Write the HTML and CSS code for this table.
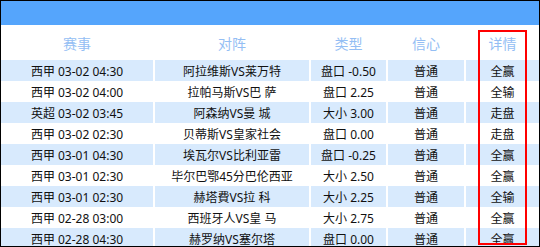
FILE: index.html
```html
<!DOCTYPE html>
<html lang="zh-CN">
<head>
<meta charset="utf-8">
<title>推荐记录</title>
<link rel="stylesheet" href="styles.css">
</head>
<body>
<div class="panel">
  <div class="topbar"></div>
  <div class="row head">
    <div class="cell">赛事</div>
    <div class="cell">对阵</div>
    <div class="cell">类型</div>
    <div class="cell">信心</div>
    <div class="cell">详情</div>
  </div>
  <div class="row odd"><div class="cell">西甲 03-02 04:30</div><div class="cell">阿拉维斯VS莱万特</div><div class="cell">盘口 -0.50</div><div class="cell">普通</div><div class="cell">全赢</div></div>
  <div class="row"><div class="cell">西甲 03-02 04:00</div><div class="cell">拉帕马斯VS巴 萨</div><div class="cell">盘口 2.25</div><div class="cell">普通</div><div class="cell">全输</div></div>
  <div class="row odd"><div class="cell">英超 03-02 03:45</div><div class="cell">阿森纳VS曼 城</div><div class="cell">大小 3.00</div><div class="cell">普通</div><div class="cell">走盘</div></div>
  <div class="row"><div class="cell">西甲 03-02 02:30</div><div class="cell">贝蒂斯VS皇家社会</div><div class="cell">盘口 0.00</div><div class="cell">普通</div><div class="cell">走盘</div></div>
  <div class="row odd"><div class="cell">西甲 03-01 04:30</div><div class="cell">埃瓦尔VS比利亚雷</div><div class="cell">盘口 -0.25</div><div class="cell">普通</div><div class="cell">全赢</div></div>
  <div class="row"><div class="cell">西甲 03-01 02:30</div><div class="cell">毕尔巴鄂45分巴伦西亚</div><div class="cell">大小 2.50</div><div class="cell">普通</div><div class="cell">全赢</div></div>
  <div class="row odd"><div class="cell">西甲 03-01 02:30</div><div class="cell">赫塔費VS拉 科</div><div class="cell">大小 2.25</div><div class="cell">普通</div><div class="cell">全输</div></div>
  <div class="row"><div class="cell">西甲 02-28 03:00</div><div class="cell">西班牙人VS皇 马</div><div class="cell">大小 2.75</div><div class="cell">普通</div><div class="cell">全赢</div></div>
  <div class="row odd"><div class="cell">西甲 02-28 04:30</div><div class="cell">赫罗纳VS塞尔塔</div><div class="cell">盘口 0.00</div><div class="cell">普通</div><div class="cell">全赢</div></div>
  <div class="highlight"></div>
</div>
</body>
</html>
```
FILE: styles.css
```css
html, body {
  margin: 0;
  padding: 0;
  background: #fff;
}
.panel {
  position: relative;
  width: 540px;
  height: 247px;
  box-sizing: border-box;
  border: 1px solid #000;
  overflow: hidden;
  font-family: "Noto Sans", "Noto Sans CJK SC", sans-serif;
  font-size: 12px;
  color: #111;
  background: #fff;
}
.topbar {
  height: 24px;
  background: #55a5fc;
}
.row {
  display: grid;
  grid-template-columns: 152px 154px 75px 76px 1fr;
  column-gap: 2px;
  height: 21px;
}
.row .cell {
  display: flex;
  align-items: center;
  justify-content: center;
  white-space: nowrap;
}
.row.odd .cell {
  background: #d8eafd;
}
.row.head {
  height: 35px;
}
.row.head .cell {
  font-size: 14px;
  color: #94bef4;
}
.highlight {
  position: absolute;
  left: 477px;
  top: 29px;
  width: 45px;
  height: 211px;
  border: 2px solid #f00;
}
```
